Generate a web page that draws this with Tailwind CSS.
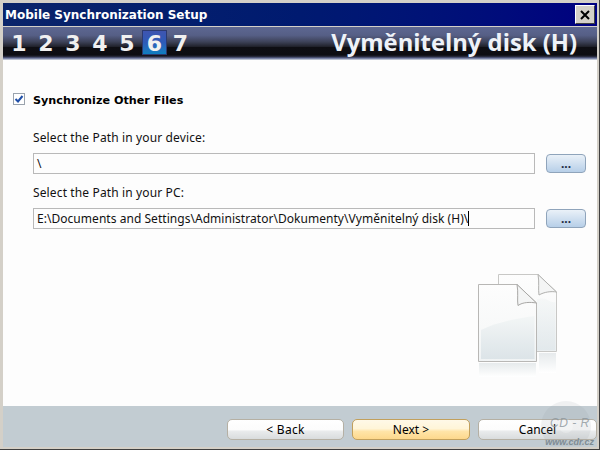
<!DOCTYPE html>
<html lang="cs">
<head>
    <meta charset="UTF-8">
    <title>Mobile Synchronization Setup</title>
    <script src="https://cdn.jsdelivr.net/npm/@tailwindcss/browser@4"></script>
</head>
<body class="m-0 overflow-hidden">
<!-- window frame -->
<div class="relative w-[600px] h-[450px] flex flex-col bg-[#d4d0c8] border-r border-b border-r-[#404040] border-b-[#404040] pt-[3px] pl-[3px] pr-[2px] pb-[2px] font-['DejaVu_Sans',sans-serif] overflow-hidden">

    <!-- title bar -->
    <div class="h-[23px] shrink-0 flex items-center justify-between bg-gradient-to-r from-[#0a246a] via-[#001a70] to-[#000080] pl-[2px] pr-[2px]">
        <span class="text-white text-[12px] font-bold leading-none">Mobile Synchronization Setup</span>
        <span class="w-[20px] h-[19px] flex items-center justify-center bg-[#d4d0c8] border border-t-white border-l-white border-r-[#404040] border-b-[#404040]">
            <svg width="10" height="10" viewBox="0 0 10 10"><path d="M1 1 L9 9 M9 1 L1 9" stroke="#000" stroke-width="2"/></svg>
        </span>
    </div>

    <!-- step strip -->
    <div class="h-[33px] mt-[1px] shrink-0 flex items-center justify-between bg-[linear-gradient(to_bottom,#5d6791_0%,#565f86_25%,#3d4258_45%,#1f2029_60%,#0e0e13_62%,#0d0d12_85%,#2a2d40_90%,#5d6791_94%,#d8dee4_100%)] pl-[2.5px] pr-[20px]">
        <div class="flex items-center text-[#f0f0f0] text-[22px] font-bold leading-none h-[27px] mb-[3px]">
            <span class="w-[27px] pt-[4px] text-center">1</span>
            <span class="w-[27px] pt-[4px] text-center">2</span>
            <span class="w-[27px] pt-[4px] text-center">3</span>
            <span class="w-[27px] pt-[4px] text-center">4</span>
            <span class="w-[27px] pt-[4px] text-center">5</span>
            <span class="w-[25px] h-[25px] ml-[1.5px] pt-[4px] flex items-center justify-center bg-gradient-to-b from-[#3e55b0] via-[#2d5bb8] to-[#0a7fc0] border border-[#2c3a70]">6</span>
            <span class="w-[27px] pt-[4px] text-center">7</span>
        </div>
        <span class="text-[#eef2f8] text-[23.8px] font-bold leading-none mb-[1px] font-['Open_Sans',sans-serif]">Vyměnitelný disk (H)</span>
    </div>

    <!-- content -->
    <div class="flex-1 flex flex-col bg-[#fdfdfd] pl-[10px] pr-[8px]">
        <div class="flex items-center gap-[8px] mt-[32px] h-[18px]">
            <span class="w-[12px] h-[12px] -mt-[4px] flex items-center justify-center bg-white border border-[#9aa3ad]">
                <svg width="10" height="10" viewBox="0 0 10 10"><path d="M1.5 5 L4 7.5 L8.5 2" fill="none" stroke="#1f4fa8" stroke-width="2"/></svg>
            </span>
            <span class="text-[11.2px] font-bold text-black leading-none">Synchronize Other Files</span>
        </div>

        <p class="ml-[20px] mt-[20px] text-[12px] leading-[16px] tracking-[0.13px] text-[#111] font-['Noto_Sans',sans-serif]">Select the Path in your device:</p>
        <div class="flex items-center gap-[11px] ml-[20px] mt-[7px]">
            <div class="w-[502px] h-[21px] flex items-center px-[3px] bg-[#fdfdfd] border border-[#b9b9b9] text-[12px] text-[#111] font-['Noto_Sans',sans-serif]">\</div>
            <button class="w-[40px] h-[19px] rounded-[4px] border border-[#8fa4bb] bg-gradient-to-b from-[#eaf1f8] to-[#b7cfe8] text-[12px] font-bold leading-[12px] text-[#1c2a44] font-['Noto_Sans',sans-serif]">...</button>
        </div>

        <p class="ml-[20px] mt-[11px] text-[12px] leading-[16px] tracking-[0.13px] text-[#111] font-['Noto_Sans',sans-serif]">Select the Path in your PC:</p>
        <div class="flex items-center gap-[11px] ml-[20px] mt-[7px]">
            <div class="w-[502px] h-[21px] flex items-center px-[3px] bg-[#fdfdfd] border border-[#b9b9b9] text-[12px] tracking-[0.04px] text-[#111] font-['Noto_Sans',sans-serif]">E:\Documents and Settings\Administrator\Dokumenty\Vyměnitelný disk (H)\<span class="w-px h-[15px] bg-black"></span></div>
            <button class="w-[40px] h-[19px] rounded-[4px] border border-[#8fa4bb] bg-gradient-to-b from-[#eaf1f8] to-[#b7cfe8] text-[12px] font-bold leading-[12px] text-[#1c2a44] font-['Noto_Sans',sans-serif]">...</button>
        </div>

        <!-- documents artwork -->
        <svg class="self-end mt-[45px] mr-[28px]" width="84" height="106" viewBox="0 0 84 106">
            <defs>
                <linearGradient id="sheet" x1="0" y1="0" x2="0" y2="1">
                    <stop offset="0" stop-color="#fdfdfd"/>
                    <stop offset="0.55" stop-color="#f8f9f9"/>
                    <stop offset="1" stop-color="#f0f3f4"/>
                </linearGradient>
                <linearGradient id="swoosh" x1="0" y1="0" x2="0" y2="1">
                    <stop offset="0" stop-color="#f3f6f6"/>
                    <stop offset="1" stop-color="#dce4e8"/>
                </linearGradient>
                <linearGradient id="mirror" x1="0" y1="0" x2="0" y2="1">
                    <stop offset="0" stop-color="#e6eaec"/>
                    <stop offset="1" stop-color="#ffffff"/>
                </linearGradient>
            </defs>
            <!-- back sheet -->
            <path d="M21.5 0.5 H61 L79.5 18 V77.5 H21.5 Z" fill="url(#sheet)" stroke="#c8c8c6"/>
            <path d="M62 25 C68 22 74 30 78.5 28 V76.5 H60 V25 Z" fill="url(#swoosh)" opacity="0.7"/>
            <path d="M61 0.5 C62.5 8 61 15 62 21 C67 18 74 17 79.5 18 Z" fill="#f4f5f5" stroke="#b0b0ae"/>
            <!-- front sheet -->
            <path d="M1.5 10.5 H40 L59.5 29 V87.5 H1.5 Z" fill="url(#sheet)" stroke="#b8b7b5"/>
            <path d="M4 56 C20 48 42 44 57.5 42 V85 H4 Z" fill="url(#swoosh)"/>
            <path d="M40 10.5 C41.5 18 40 26 41 31.5 C46 28 53 28 59.5 29 Z" fill="#f4f5f5" stroke="#a8a7a5"/>
            <!-- reflection -->
            <rect x="2" y="89" width="57" height="14" fill="url(#mirror)"/>
            <rect x="62" y="79" width="17" height="20" fill="url(#mirror)"/>
        </svg>
    </div>

    <!-- footer -->
    <div class="h-[41px] shrink-0 flex items-start justify-end gap-[8px] bg-[#c2ccd2] pt-[13px]">
        <button class="w-[117px] h-[21px] rounded-[5px] border border-[#b5b0a4] bg-[linear-gradient(to_bottom,#ffffff_0%,#fcfcfc_50%,#e9ebec_60%,#d9dcdd_100%)] text-[12px] leading-none tracking-[0.3px] text-black font-['Noto_Sans',sans-serif]">&lt; Back</button>
        <button class="w-[118px] h-[21px] rounded-[5px] border border-[#c2a05c] bg-[linear-gradient(to_bottom,#fff9e8_0%,#fff5d8_45%,#ffe4a8_60%,#fdd88c_100%)] text-[12px] leading-none text-black font-['Noto_Sans',sans-serif]">Next &gt;</button>
        <button class="w-[119px] h-[21px] rounded-[5px] border border-[#b5b0a4] bg-[linear-gradient(to_bottom,#ffffff_0%,#fcfcfc_50%,#e9ebec_60%,#d9dcdd_100%)] text-[12px] leading-none text-black font-['Noto_Sans',sans-serif]">Cancel</button>
    </div>

    <!-- watermark -->
    <svg class="absolute left-[538px] top-[398px] pointer-events-none" width="56" height="48" viewBox="0 0 56 48">
        <circle cx="28" cy="28" r="25" fill="#8b959b" fill-opacity="0.12"/>
        <circle cx="28" cy="28" r="7" fill="#ffffff" fill-opacity="0.25"/>
    </svg>
    <span class="absolute left-[550px] top-[417px] whitespace-nowrap text-[12px] leading-none italic text-[#8b959b]/80 tracking-[0.5px] font-['Liberation_Sans',sans-serif]">CD - R</span>
    <span class="absolute right-[5px] bottom-[2px] text-[9px] leading-none italic font-bold text-[#7f8c94] font-['Liberation_Sans',sans-serif]">www.cdr.cz</span>
</div>
</body>
</html>
